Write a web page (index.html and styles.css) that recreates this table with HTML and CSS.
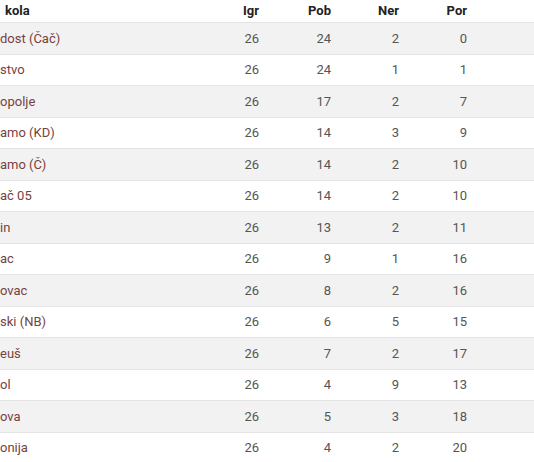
FILE: index.html
```html
<!DOCTYPE html>
<html lang="sr">
<head>
<meta charset="utf-8">
<title>Tabela</title>
<link rel="stylesheet" href="styles.css">
</head>
<body>
<div class="table">
  <div class="row head">
    <div class="name">kola</div>
    <div class="num">Igr</div>
    <div class="num">Pob</div>
    <div class="num">Ner</div>
    <div class="num">Por</div>
    <div></div>
  </div>
  <div class="row alt"><div class="name">dost (Čač)</div><div class="num">26</div><div class="num">24</div><div class="num">2</div><div class="num">0</div><div></div></div>
  <div class="row"><div class="name">stvo</div><div class="num">26</div><div class="num">24</div><div class="num">1</div><div class="num">1</div><div></div></div>
  <div class="row alt"><div class="name">opolje</div><div class="num">26</div><div class="num">17</div><div class="num">2</div><div class="num">7</div><div></div></div>
  <div class="row"><div class="name">amo (KD)</div><div class="num">26</div><div class="num">14</div><div class="num">3</div><div class="num">9</div><div></div></div>
  <div class="row alt"><div class="name">amo (Č)</div><div class="num">26</div><div class="num">14</div><div class="num">2</div><div class="num">10</div><div></div></div>
  <div class="row"><div class="name">ač 05</div><div class="num">26</div><div class="num">14</div><div class="num">2</div><div class="num">10</div><div></div></div>
  <div class="row alt"><div class="name">in</div><div class="num">26</div><div class="num">13</div><div class="num">2</div><div class="num">11</div><div></div></div>
  <div class="row"><div class="name">ac</div><div class="num">26</div><div class="num">9</div><div class="num">1</div><div class="num">16</div><div></div></div>
  <div class="row alt"><div class="name">ovac</div><div class="num">26</div><div class="num">8</div><div class="num">2</div><div class="num">16</div><div></div></div>
  <div class="row"><div class="name">ski (NB)</div><div class="num">26</div><div class="num">6</div><div class="num">5</div><div class="num">15</div><div></div></div>
  <div class="row alt"><div class="name">euš</div><div class="num">26</div><div class="num">7</div><div class="num">2</div><div class="num">17</div><div></div></div>
  <div class="row"><div class="name">ol</div><div class="num">26</div><div class="num">4</div><div class="num">9</div><div class="num">13</div><div></div></div>
  <div class="row alt"><div class="name">ova</div><div class="num">26</div><div class="num">5</div><div class="num">3</div><div class="num">18</div><div></div></div>
  <div class="row"><div class="name">onija</div><div class="num">26</div><div class="num">4</div><div class="num">2</div><div class="num">20</div><div></div></div>
</div>
</body>
</html>
```

FILE: styles.css
```css
html, body {
  margin: 0;
  padding: 0;
  background: #ffffff;
}
body {
  font-family: Roboto, "Liberation Sans", sans-serif;
  font-size: 13px;
  color: #555555;
  overflow: hidden;
}
.table {
  display: flex;
  flex-direction: column;
}
.row {
  display: grid;
  grid-template-columns: 187px 72px 72px 68px 68px 1fr;
  align-items: center;
  height: 31.5px;
  box-sizing: border-box;
  border-bottom: 1px solid #e4e4e4;
}
.row.alt {
  background: #f2f2f2;
}
.row.head {
  height: 23px;
  font-size: 13px;
  font-weight: bold;
  color: #222222;
  padding-bottom: 2px;
}
.name {
  color: #76423f;
  white-space: nowrap;
}
.head .name {
  color: #222222;
  padding-left: 5px;
}
.num {
  text-align: right;
}
```
